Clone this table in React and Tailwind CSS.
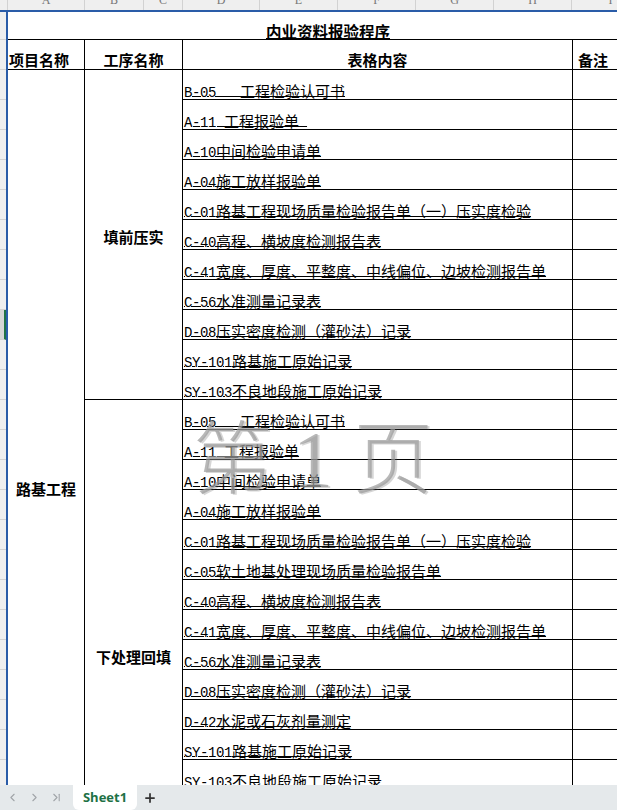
import React from 'react';
import { ChevronLeft, ChevronRight, ChevronLast, Plus } from 'lucide-react';

const g1 = [
  'B-05   工程检验认可书',
  'A-11 工程报验单 ',
  'A-10中间检验申请单',
  'A-04施工放样报验单',
  'C-01路基工程现场质量检验报告单（一）压实度检验',
  'C-40高程、横坡度检测报告表',
  'C-41宽度、厚度、平整度、中线偏位、边坡检测报告单',
  'C-56水准测量记录表',
  'D-08压实密度检测（灌砂法）记录',
  'SY-101路基施工原始记录',
  'SY-103不良地段施工原始记录',
];

const g2 = [
  'B-05   工程检验认可书',
  'A-11 工程报验单',
  'A-10中间检验申请单',
  'A-04施工放样报验单',
  'C-01路基工程现场质量检验报告单（一）压实度检验',
  'C-05软土地基处理现场质量检验报告单',
  'C-40高程、横坡度检测报告表',
  'C-41宽度、厚度、平整度、中线偏位、边坡检测报告单',
  'C-56水准测量记录表',
  'D-08压实密度检测（灌砂法）记录',
  'D-42水泥或石灰剂量测定',
  'SY-101路基施工原始记录',
  'SY-103不良地段施工原始记录',
  '',
  '',
  '',
  '',
];

function Mixed({ text }) {
  const parts = text.split(/([\x00-\x7F]+)/).filter(Boolean);
  return parts.map((p, i) =>
    /^[\x00-\x7F]+$/.test(p) ? (
      <span key={i} className="font-['Liberation_Mono','Noto_Sans_CJK_SC',monospace] text-[14px] tracking-[-0.4px]">
        {p}
      </span>
    ) : (
      <span key={i}>{p}</span>
    )
  );
}

const cols = [
  { l: '', w: 'w-[8px]' },
  { l: 'A', w: 'w-[77px]' },
  { l: 'B', w: 'w-[59px]' },
  { l: 'C', w: 'w-[39px]' },
  { l: 'D', w: 'w-[77px]' },
  { l: 'E', w: 'w-[78px]' },
  { l: 'F', w: 'w-[78px]' },
  { l: 'G', w: 'w-[78px]' },
  { l: 'H', w: 'w-[78px]' },
  { l: 'I', w: 'w-[78px]' },
];

function Group({ name, rows }) {
  return (
    <div className="flex">
      <div className="w-[98px] shrink-0 border-r border-b border-black flex items-center justify-center font-bold text-[15px] pt-[6px]">
        {name}
      </div>
      <div className="flex flex-col">
        {rows.map((r, i) => (
          <div key={i} className="flex h-[30px]">
            <div className="w-[390px] shrink-0 border-r border-b border-black flex items-end pl-[1px] whitespace-pre text-[15px] leading-[12px]">
              {r && (
                <span className="underline underline-offset-[-1px] decoration-1 decoration-black">
                  <Mixed text={r} />
                </span>
              )}
            </div>
            <div className="w-[80px] border-b border-black" />
          </div>
        ))}
      </div>
    </div>
  );
}

export default function App() {
  const rowHeaders = Array.from({ length: 27 });
  return (
    <div className="w-[617px] h-[810px] overflow-hidden relative bg-white flex flex-col font-['Noto_Sans_CJK_SC',sans-serif] text-black">
      {/* column header */}
      <div className="h-[12px] shrink-0 flex bg-[#efefef] border-b-2 border-[#2a5ca8] overflow-hidden">
        {cols.map((c, i) => (
          <div
            key={i}
            className={`${c.w} shrink-0 border-r border-[#d2d2d2] flex justify-center items-start overflow-hidden`}
          >
            <span className="mt-[-6px] text-[12px] leading-[12px] text-[#777] font-['Liberation_Serif',serif]">{c.l}</span>
          </div>
        ))}
      </div>

      {/* body */}
      <div className="flex-1 flex overflow-hidden">
        {/* row header */}
        <div className="w-[6px] shrink-0 bg-[#efefef] flex flex-col">
          <div className="h-[28px] shrink-0 border-b border-[#d2d2d2]" />
          {rowHeaders.map((_, i) => (
            <div
              key={i}
              className={`h-[30px] shrink-0 border-b border-[#d2d2d2] ${i === 9 ? 'bg-[#d6d6d6] border-r-2 border-r-[#217346]' : ''}`}
            />
          ))}
        </div>
        <div className="w-[2px] shrink-0 bg-[#2a5ca8]" />

        {/* sheet */}
        <div className="flex-1 flex flex-col min-w-0">
          {/* title row */}
          <div className="h-[27px] shrink-0 w-[640px] flex items-end justify-center">
            <span className="font-bold text-[15.5px] leading-[14px] underline underline-offset-[0px] decoration-1 mb-[1px]">
              内业资料报验程序
            </span>
          </div>
          {/* header row */}
          <div className="h-[31px] shrink-0 flex border-t border-b border-black font-bold text-[15px] leading-[16px]">
            <div className="w-[77px] shrink-0 border-r border-black flex items-end pl-[1px] pb-[1px]">项目名称</div>
            <div className="w-[98px] shrink-0 border-r border-black flex items-end justify-center pb-[1px]">工序名称</div>
            <div className="w-[390px] shrink-0 border-r border-black flex items-end justify-center pb-[1px]">表格内容</div>
            <div className="flex-1 flex items-end pl-[5px] pb-[1px] whitespace-nowrap">备注</div>
          </div>
          {/* data */}
          <div className="flex">
            <div className="w-[77px] shrink-0 border-r border-b border-black flex items-center justify-center font-bold text-[15px] h-[840px]">
              路基工程
            </div>
            <div className="flex flex-col">
              <Group name="填前压实" rows={g1} />
              <Group name="下处理回填" rows={g2} />
            </div>
          </div>
        </div>
      </div>

      {/* watermark */}
      <div className="absolute left-[193px] top-[420px] pointer-events-none whitespace-pre text-[80px] leading-none font-light text-[#9a9a9a]/70 font-['Liberation_Serif','Noto_Sans_CJK_SC',serif] [text-shadow:2px_1px_0_rgba(90,90,90,0.25)]">
        第 1 页
      </div>

      {/* tab bar */}
      <div className="h-[25px] shrink-0 bg-[#e5e9eb] flex items-stretch">
        <div className="flex items-center gap-[9px] pl-[6px] w-[73px] text-[#a0a4a8]">
          <ChevronLeft size={13} strokeWidth={2} />
          <ChevronRight size={13} strokeWidth={2} />
          <ChevronLast size={13} strokeWidth={2} />
        </div>
        <div className="w-[64px] bg-white rounded-b-[6px] flex items-center justify-center text-[13px] font-bold text-[#1e7145] font-['Open_Sans',sans-serif]">
          Sheet1
        </div>
        <div className="flex items-center pl-[6px] text-[#333]">
          <Plus size={14} strokeWidth={3} />
        </div>
      </div>
    </div>
  );
}
